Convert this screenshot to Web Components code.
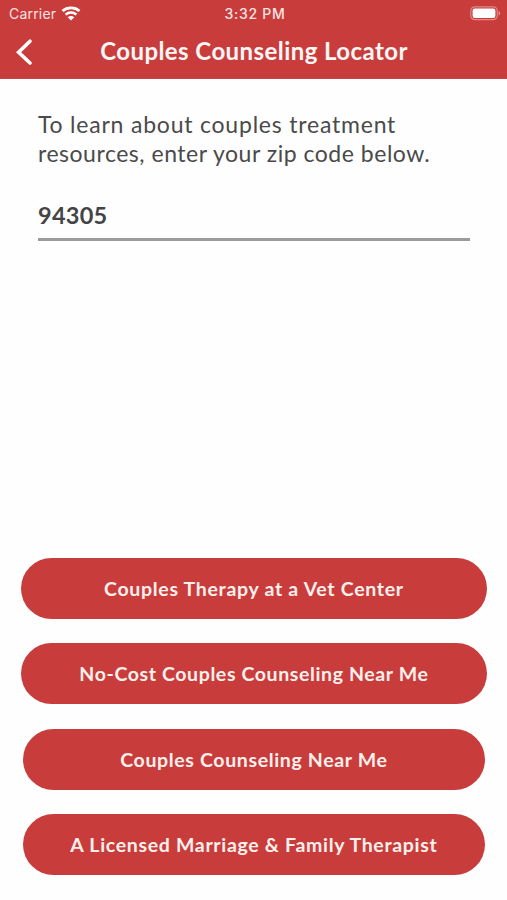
<!DOCTYPE html>
<html lang="en"><head><meta charset="utf-8"><title>Couples Counseling Locator</title>
<style>
body{margin:0;background:#fefefe}
</style></head>
<body>
<locator-screen>
  <status-bar slot="top" carrier="Carrier" time="3:32 PM"></status-bar>
  <nav-bar slot="top">Couples Counseling Locator</nav-bar>
  <zip-form value="94305">
    <span slot="line1">To learn about couples treatment</span>
    <span slot="line2">resources, enter your zip code below.</span>
  </zip-form>
  <pill-button slot="actions" style="--track:.7px">Couples Therapy at a Vet Center</pill-button>
  <pill-button slot="actions" style="--track:.62px">No-Cost Couples Counseling Near Me</pill-button>
  <pill-button slot="actions" style="--track:.65px;--inset:2.5px">Couples Counseling Near Me</pill-button>
  <pill-button slot="actions" style="--track:.68px;--inset:2.5px">A Licensed Marriage &amp; Family Therapist</pill-button>
</locator-screen>
<script>
const define = (name, html, setup) => customElements.define(name, class extends HTMLElement {
  constructor() {
    super();
    this.attachShadow({mode: 'open'}).innerHTML = html;
  }
  connectedCallback() { if (setup) setup(this, this.shadowRoot); }
});

define('locator-screen', `<style>
  :host{display:flex;flex-direction:column;box-sizing:border-box;height:900px;overflow:hidden;background:#fefefe;font-family:Lato,"Open Sans",sans-serif;color:#4a4a4a}
  header{height:79px;box-sizing:border-box;background:#c93c3c;color:#fff;border-bottom:1px solid #cb4646;flex:none}
  main{flex:1}
  footer{display:grid;gap:24.5px;padding:0 19.7px 24.9px 20.5px}
</style><header><slot name="top"></slot></header><main><slot></slot></main><footer><slot name="actions"></slot></footer>`);

define('status-bar', `<style>
  :host{display:grid;grid-template-columns:1fr auto 1fr;align-items:center;height:26px;padding:0 6px 0 9px;font:400 14px/27px Inter,"Liberation Sans",sans-serif;color:#fbe3e1}
  .left{display:flex;align-items:center;gap:5px}
  .carrier{letter-spacing:.2px}
  .time{font-weight:500;letter-spacing:.75px}
  svg{display:block}
  .battery{justify-self:end}
</style>
<div class="left"><span class="carrier"></span>
<svg width="20" height="15" viewBox="0 0 20 15" fill="none" stroke="#fff"><path d="M1.5 5.1C6.2.9 13.8.9 18.5 5.1" stroke-width="2.7"/><path d="M4.6 8.7c3-2.8 7.8-2.8 10.8 0" stroke-width="2.5"/><path d="M10 14.5 6.7 11.2c1.9-1.7 4.7-1.7 6.6 0Z" fill="#fff" stroke="none"/></svg></div>
<span class="time"></span>
<svg class="battery" width="31" height="15" viewBox="0 0 31 15"><rect x=".8" y=".8" width="26.4" height="12.9" rx="4" fill="none" stroke="#e08785" stroke-width="1.2"/><rect x="2.6" y="2.6" width="22.8" height="9.3" rx="2.2" fill="#fff"/><path d="M28.6 5.2c2 .7 2 3.5 0 4.2Z" fill="#e59a98"/></svg>`,
(el, r) => {
  r.querySelector('.carrier').textContent = el.getAttribute('carrier');
  r.querySelector('.time').textContent = el.getAttribute('time');
});

define('nav-bar', `<style>
  :host{display:grid;grid-template-columns:41px 1fr 40px;align-items:center;height:52px}
  svg{display:block;margin-left:15px}
  h1{margin:0;text-align:center;font-weight:700;font-size:24px;line-height:50px;letter-spacing:.43px;white-space:nowrap;color:#fff7f5;padding-bottom:2px}
</style>
<svg width="18" height="28" viewBox="0 0 18 28" fill="none" stroke="#fff" stroke-width="3.6" stroke-linecap="round" stroke-linejoin="miter"><path d="M15 3.2 3.6 14.2l11.4 10.8"/></svg>
<h1><slot></slot></h1>`);

define('zip-form', `<style>
  :host{display:block;padding:31px 37px 0 38px}
  p{margin:0;font-size:23px;line-height:29px;white-space:nowrap}
  .a{letter-spacing:.79px}
  .b{letter-spacing:.52px}
  .field{margin-top:30px;height:43px;box-sizing:border-box;border-bottom:3px solid #9b9b9b;font-weight:700;font-size:23.5px;line-height:34px;letter-spacing:.25px;color:#444}
</style><p class="a"><slot name="line1"></slot></p><p class="b"><slot name="line2"></slot></p><div class="field"></div>`,
(el, r) => { r.querySelector('.field').textContent = el.getAttribute('value'); });

define('pill-button', `<style>
  :host{display:block;margin:0 var(--inset,0px)}
  button{display:block;width:100%;height:61px;border:0;border-radius:30.5px;padding:0;background:#c93c3c;color:#fff0ec;font:700 19.5px/61px Lato,"Open Sans",sans-serif;letter-spacing:var(--track,1px);white-space:nowrap}
</style><button><slot></slot></button>`);
</script>
</body></html>
